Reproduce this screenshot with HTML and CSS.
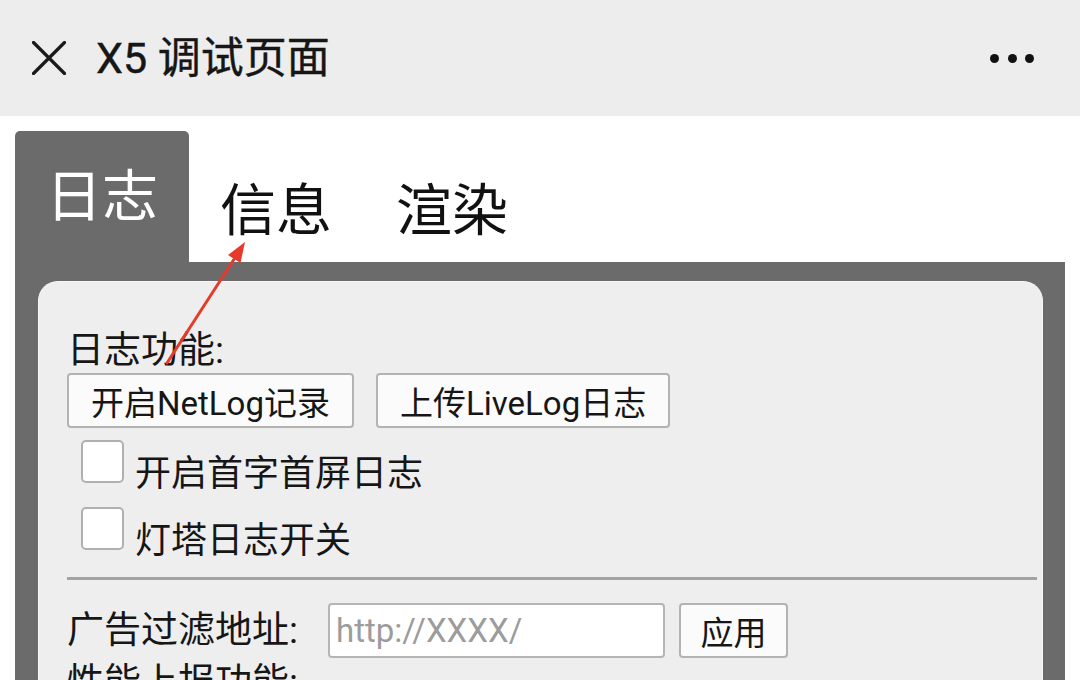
FILE: index.html
```html
<!DOCTYPE html>
<html lang="zh">
<head>
<meta charset="utf-8">
<title>X5 调试页面</title>
<link rel="stylesheet" href="styles.css">
</head>
<body>
<header class="topbar">
  <svg class="close-icon" width="34" height="34" viewBox="0 0 34 34">
    <path d="M1.5 1.5 L32.5 32.5 M32.5 1.5 L1.5 32.5" stroke="#1a1a1a" stroke-width="3.2" stroke-linecap="round" fill="none"/>
  </svg>
  <h1 class="title">X5 调试页面</h1>
  <div class="more">
    <span class="dot"></span><span class="dot"></span><span class="dot"></span>
  </div>
</header>
<main class="page">
  <nav class="tabs">
    <div class="tab tab-active">日志</div>
    <div class="tab">信息</div>
    <div class="tab">渲染</div>
  </nav>
  <section class="panel">
    <div class="card">
      <div class="label">日志功能:</div>
      <div class="btn-row">
        <button class="btn">开启NetLog记录</button>
        <button class="btn">上传LiveLog日志</button>
      </div>
      <label class="check-row"><span class="checkbox"></span><span class="check-label">开启首字首屏日志</span></label>
      <label class="check-row"><span class="checkbox"></span><span class="check-label">灯塔日志开关</span></label>
      <div class="divider"></div>
      <div class="form-row">
        <span class="label">广告过滤地址:</span>
        <input class="text-input" type="text" placeholder="http://XXXX/">
        <button class="btn btn-small">应用</button>
      </div>
      <div class="label label-next">性能上报功能:</div>
    </div>
  </section>
</main>
<svg class="annotation" width="1080" height="680" viewBox="0 0 1080 680">
  <path d="M167 363 L234.5 258.5" stroke="#e63b2b" stroke-width="3" stroke-linecap="round" fill="none"/>
  <polygon points="245,242 240.5,263 228,255" fill="#e63b2b"/>
</svg>
</body>
</html>
```
FILE: styles.css
```css
html, body {
  margin: 0;
  padding: 0;
}
body {
  width: 1080px;
  height: 680px;
  overflow: hidden;
  background: #ffffff;
  font-family: Roboto, "Noto Sans CJK SC", "Noto Sans", sans-serif;
  color: #1a1a1a;
  position: relative;
}
.topbar {
  height: 116px;
  background: #ededed;
  display: flex;
  align-items: center;
}
.close-icon {
  margin-left: 32px;
  flex: none;
}
.title {
  margin: 0 0 0 30px;
  font-size: 43px;
  font-weight: 400;
  line-height: 1;
  color: #161616;
  flex: 1;
  -webkit-text-stroke: 0.4px #161616;
}
.more {
  display: flex;
  gap: 8.5px;
  margin-right: 46px;
}
.dot {
  width: 9px;
  height: 9px;
  border-radius: 50%;
  background: #111;
}
.page {
  padding: 15px 15px 0 15px;
}
.tabs {
  display: flex;
  align-items: flex-start;
}
.tab {
  font-size: 56px;
  line-height: 64px;
  color: #111;
  padding-top: 48px;
  margin-left: 31px;
  margin-right: 33px;
}
.tab-active {
  width: 174px;
  height: 131px;
  box-sizing: border-box;
  margin: 0;
  padding-top: 34px;
  text-align: center;
  background: #6b6b6b;
  color: #ffffff;
  border-radius: 5px 5px 0 0;
}
.panel {
  background: #6b6b6b;
  padding: 19px 22px 0 23px;
  height: 420px;
}
.card {
  background: #eeeeee;
  border-radius: 20px 20px 0 0;
  border: 1px solid #f7f7f7;
  border-bottom: none;
  height: 100%;
  box-sizing: border-box;
  padding: 47px 5px 0 28px;
}
.label {
  font-size: 37px;
  line-height: 44px;
  color: #161616;
  white-space: nowrap;
}
.btn-row {
  display: flex;
  gap: 22px;
}
.btn {
  font-family: Roboto, "Noto Sans CJK SC", sans-serif;
  font-size: 33px;
  color: #161616;
  height: 55px;
  padding: 0 22px;
  background: #fbfbfb;
  border: 2px solid #b3b3b3;
  border-radius: 4px;
  margin-left: 0;
}
.check-row {
  display: flex;
  align-items: flex-start;
  height: 67px;
}
.checkbox {
  width: 39px;
  height: 39px;
  margin: 12px 0 0 14px;
  background: #ffffff;
  border: 2px solid #b0b0b0;
  border-radius: 5px;
  flex: none;
}
.check-label {
  font-size: 36px;
  line-height: 44px;
  margin: 24px 0 0 11px;
  color: #161616;
}
.divider {
  height: 3px;
  background: #a3a3a3;
  margin: 15px 0 0 0;
}
.form-row {
  display: flex;
  align-items: center;
  margin-top: 23px;
}
.text-input {
  width: 337px;
  height: 55px;
  box-sizing: border-box;
  margin-left: 30px;
  padding: 0 6px;
  font-family: Roboto, "Noto Sans CJK SC", sans-serif;
  font-size: 33px;
  background: #ffffff;
  border: 2px solid #b5b5b5;
  border-radius: 4px;
  outline: none;
}
.text-input::placeholder {
  color: #9c9c9c;
}
.btn-small {
  width: 109px;
  padding: 0;
  margin-left: 14px;
}
.label-next {
  margin-top: 3px;
}
.annotation {
  position: absolute;
  left: 0;
  top: 0;
  pointer-events: none;
}
```
